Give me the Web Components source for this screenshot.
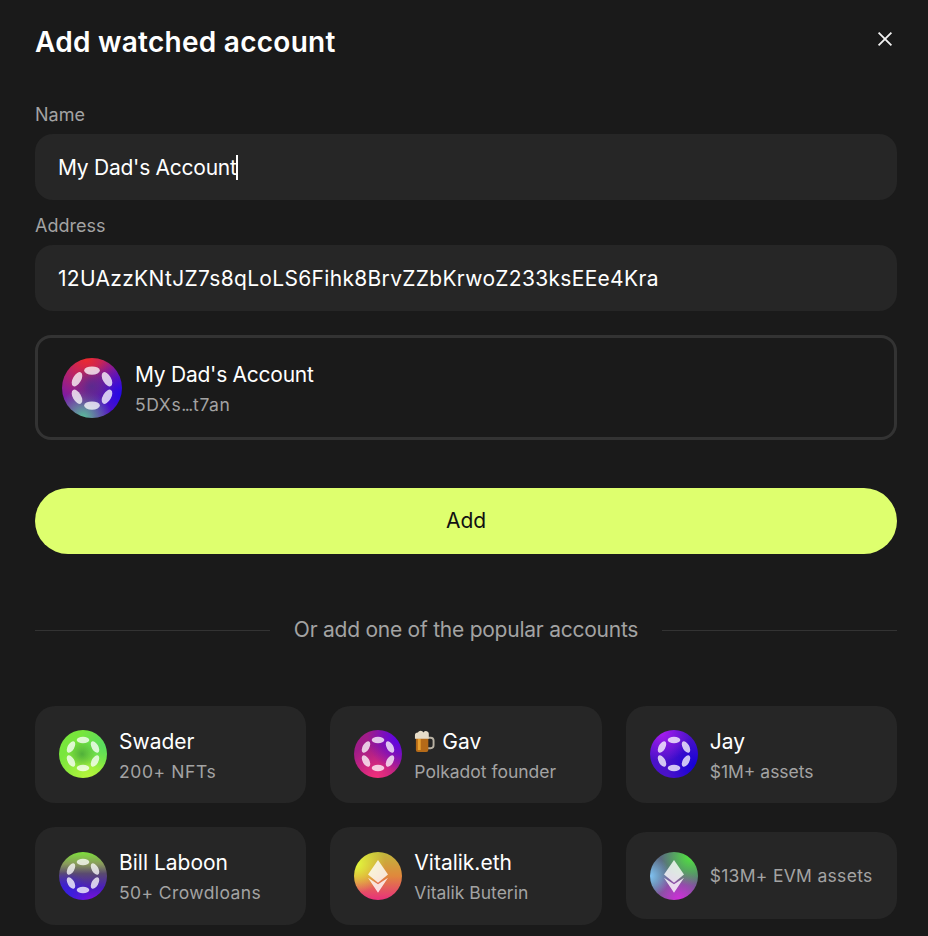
<!doctype html>
<html lang="en">
<head>
<meta charset="utf-8">
<title>Add watched account</title>
<style>
  html, body { margin: 0; height: 100%; background: #1a1a1a; overflow: hidden; }
  body { font-family: Inter, "Liberation Sans", sans-serif; color: #fff; }
</style>
</head>
<body>
<watched-dialog heading="Add watched account">
  <text-field label="Name" value="My Dad's Account" track="-0.25" focused></text-field>
  <text-field label="Address" value="12UAzzKNtJZ7s8qLoLS6Fihk8BrvZZbKrwoZ233ksEEe4Kra" track="0.31"></text-field>
  <account-preview name="My Dad's Account" address="5DXs...t7an"></account-preview>
  <lime-button>Add</lime-button>
  <or-divider>Or add one of the popular accounts</or-divider>
  <account-grid>
    <account-card name="Swader" note="200+ NFTs" logo="dot" tint="swader" track="0.6"></account-card>
    <account-card name="Gav" note="Polkadot founder" logo="dot" tint="gav" beer></account-card>
    <account-card name="Jay" note="$1M+ assets" logo="dot" tint="jay"></account-card>
    <account-card name="Bill Laboon" note="50+ Crowdloans" logo="dot" tint="bill" track="0.4"></account-card>
    <account-card name="Vitalik.eth" note="Vitalik Buterin" logo="eth" tint="vitalik"></account-card>
    <account-card note="$13M+ EVM assets" logo="eth" tint="evm" track="0.3" compact></account-card>
  </account-grid>
</watched-dialog>

<script>
const TINTS = {
  preview: "radial-gradient(circle at 50% 48%, #5b2a8e 0%, transparent 50%), radial-gradient(circle at 35% 100%, #58c09a 0%, transparent 40%), radial-gradient(circle at 100% 62%, #2208e8 0%, transparent 55%), radial-gradient(circle at 40% 0%, #f02a2c 0%, transparent 65%), #7a1aa8",
  swader: "radial-gradient(circle at 48% 50%, #50b03a 0%, transparent 42%), radial-gradient(circle at 95% 30%, #58dc60 0%, transparent 45%), radial-gradient(circle at 60% 100%, #b8f53c 0%, transparent 60%), #78e63c",
  gav: "radial-gradient(circle at 100% 15%, #5200f5 0%, transparent 55%), radial-gradient(circle at 45% 100%, #f4307a 0%, transparent 60%), #a01c88",
  jay: "radial-gradient(circle at 25% 5%, #a81cf0 0%, transparent 50%), radial-gradient(circle at 95% 75%, #1200d8 0%, transparent 50%), #4a12c8",
  bill: "radial-gradient(circle at 15% 90%, #3420e0 0%, transparent 40%), linear-gradient(180deg, #7ee03c 0%, #8a9a5c 25%, #5a4a70 45%, #4a1cc0 75%, #7a10e0 100%)",
  vitalik: "radial-gradient(circle at 5% 25%, #e2f83c 0%, transparent 50%), linear-gradient(180deg, #c0b83c 0%, #e0883c 50%, #e8307c 100%)",
  evm: "radial-gradient(circle at 0% 50%, #80c4f4 0%, transparent 38%), radial-gradient(circle at 85% 8%, #50e83c 0%, transparent 50%), radial-gradient(circle at 60% 100%, #d42cdc 0%, transparent 55%), #5a6a80",
};

const LOGOS = {
  dot: `<g fill="#fff" fill-opacity=".76">
    <ellipse cx="24" cy="10" rx="6.300" ry="3.300"/>
    <ellipse cx="24" cy="38" rx="6.300" ry="3.300"/>
    <ellipse cx="12" cy="17" rx="6.300" ry="3.300" transform="rotate(-60 12 17)"/>
    <ellipse cx="36" cy="17" rx="6.300" ry="3.300" transform="rotate(60 36 17)"/>
    <ellipse cx="12" cy="31" rx="6.300" ry="3.300" transform="rotate(60 12 31)"/>
    <ellipse cx="36" cy="31" rx="6.300" ry="3.300" transform="rotate(-60 36 31)"/>
  </g>`,
  eth: `<g fill="#fff" fill-opacity=".8">
    <path d="M24 8 34 22.500 24 30.700 14 22.500Z"/>
    <path d="M14 25.700 24 32.300 34 25.700 24 40.700Z"/>
  </g>`,
};

class TokenAvatar extends HTMLElement {
  connectedCallback() {
    const size = this.getAttribute("size") ?? 48;
    const root = this.shadowRoot ?? this.attachShadow({ mode: "open" });
    root.innerHTML = `
      <style>
        :host { display: block; flex: none; width: ${size}px; height: ${size}px; border-radius: 50%; overflow: hidden; background: ${TINTS[this.getAttribute("tint")]}; }
        svg { display: block; width: 100%; height: 100%; }
      </style>
      <svg viewBox="0 0 48 48">${LOGOS[this.getAttribute("logo")]}</svg>
    `;
  }
}

class WatchedDialog extends HTMLElement {
  constructor() {
    super();
    this.attachShadow({ mode: "open" });
  }

  connectedCallback() {
    this.shadowRoot.innerHTML = `
      <style>
        :host { display: block; padding: 21px 31px 0 35px; background: #1a1a1a; }
        header { display: flex; justify-content: space-between; align-items: center; height: 42px; margin-bottom: 39px; }
        h1 { margin: 0; font-size: 28px; line-height: 42px; font-weight: 600; letter-spacing: 0.27px; color: #fff; }
        button { all: unset; display: block; width: 24px; height: 24px; margin-top: -6px; }
        svg { display: block; }
        main { display: flex; flex-direction: column; }
      </style>
      <header>
        <h1>${this.getAttribute("heading")}</h1>
        <button aria-label="Close">
          <svg width="24" height="24" viewBox="0 0 24 24" fill="none" stroke="#f2f2f2" stroke-width="1.800"><path d="M5.600 5.600 18.400 18.400M18.400 5.600 5.600 18.400"/></svg>
        </button>
      </header>
      <main><slot></slot></main>
    `;
  }
}

class TextField extends HTMLElement {
  connectedCallback() {
    const root = this.attachShadow({ mode: "open" });
    const caret = this.hasAttribute("focused") ? `<i></i>` : "";
    root.innerHTML = `
      <style>
        :host { display: block; margin-bottom: 13px; }
        label { display: block; height: 32px; font-size: 18px; line-height: 25px; color: #a3a3a3; }
        div { display: flex; align-items: center; height: 66px; padding: 0 23px; box-sizing: border-box; border-radius: 18px; background: #262626; font-size: 21px; color: #fff; }
        span { letter-spacing: ${this.getAttribute("track") ?? 0}px; }
        i { display: block; width: 2px; height: 25px; background: #fff; margin-left: -1px; }
      </style>
      <label>${this.getAttribute("label")}</label>
      <div><span>${this.getAttribute("value")}</span>${caret}</div>
    `;
  }
}

class AccountPreview extends HTMLElement {
  connectedCallback() {
    const root = this.attachShadow({ mode: "open" });
    const address = this.getAttribute("address").replace("...", "<em>...</em>");
    root.innerHTML = `
      <style>
        :host { display: flex; align-items: center; gap: 13px; height: 105px; box-sizing: border-box; padding: 0 24px; border: 3px solid #333; border-radius: 16px; margin: 11px 0 48px; }
        div { padding-top: 3px; }
        b { display: block; font-weight: 400; font-size: 21px; line-height: 30px; letter-spacing: -0.25px; color: #fff; }
        span { display: block; font-size: 17.500px; line-height: 29px; letter-spacing: 0.6px; color: #a3a3a3; }
        em { font-style: normal; letter-spacing: -1.6px; margin-right: 1.500px; }
      </style>
      <token-avatar size="60" logo="dot" tint="preview"></token-avatar>
      <div><b>${this.getAttribute("name")}</b><span>${address}</span></div>
    `;
  }
}

class LimeButton extends HTMLElement {
  connectedCallback() {
    const root = this.attachShadow({ mode: "open" });
    root.innerHTML = `
      <style>
        :host { display: flex; align-items: center; justify-content: center; height: 66px; border-radius: 33px; background: #deff6e; color: #111; font-size: 21px; margin-bottom: 58px; }
        span { padding-bottom: 2px; }
      </style>
      <span><slot></slot></span>
    `;
  }
}

class OrDivider extends HTMLElement {
  connectedCallback() {
    const root = this.attachShadow({ mode: "open" });
    root.innerHTML = `
      <style>
        :host { display: flex; align-items: center; gap: 24px; height: 36px; margin-bottom: 58px; color: #a3a3a3; font-size: 21px; letter-spacing: -0.24px; white-space: nowrap; }
        hr { flex: 1; height: 1px; margin: 0; border: 0; background: #333; }
        span { padding-bottom: 2px; }
      </style>
      <hr><span><slot></slot></span><hr>
    `;
  }
}

class AccountGrid extends HTMLElement {
  connectedCallback() {
    const root = this.attachShadow({ mode: "open" });
    root.innerHTML = `
      <style>
        :host { display: grid; grid-template-columns: repeat(3, 1fr); grid-template-rows: 97px 98px; gap: 24px; }
      </style>
      <slot></slot>
    `;
  }
}

class AccountCard extends HTMLElement {
  connectedCallback() {
    const root = this.attachShadow({ mode: "open" });
    const name = this.getAttribute("name");
    const beer = this.hasAttribute("beer") ? `
      <svg class="beer" width="21" height="23" viewBox="0 0 22 24" aria-label="beer">
        <path d="M14 8h3.500a3 3 0 0 1 3 3v5a3 3 0 0 1-3 3H14" fill="none" stroke="#b9b2a4" stroke-width="2"/>
        <rect x="2" y="6" width="13" height="17" rx="2" fill="#b56a18"/>
        <rect x="4" y="9" width="3" height="12" fill="#e8a030"/>
        <path d="M1 5.500a3 3 0 0 1 3-3 3.500 3.500 0 0 1 6 0 3 3 0 0 1 5.500 2V9H1Z" fill="#e6dcc8"/>
      </svg>` : "";
    const title = name ? `<b>${beer}${name}</b>` : "";
    const compact = this.hasAttribute("compact");
    root.innerHTML = `
      <style>
        :host { display: flex; align-items: center; gap: 12px; padding: 0 24px; border-radius: 20px; background: #262626; }
        :host([compact]) { align-self: center; height: 87px; margin-bottom: 1px; }
        token-avatar { margin-bottom: ${compact ? 0 : 1}px; }
        div { padding-top: ${compact ? 0 : 3}px; }
        b { display: flex; align-items: center; gap: 7px; font-weight: 400; font-size: 21px; line-height: 30px; color: #fff; }
        span { display: block; font-size: 17.500px; line-height: 29px; letter-spacing: ${this.getAttribute("track") ?? 0}px; color: #a3a3a3; white-space: nowrap; }
      </style>
      <token-avatar logo="${this.getAttribute("logo")}" tint="${this.getAttribute("tint")}"></token-avatar>
      <div>${title}<span>${this.getAttribute("note")}</span></div>
    `;
  }
}

customElements.define("token-avatar", TokenAvatar);
customElements.define("watched-dialog", WatchedDialog);
customElements.define("text-field", TextField);
customElements.define("account-preview", AccountPreview);
customElements.define("lime-button", LimeButton);
customElements.define("or-divider", OrDivider);
customElements.define("account-grid", AccountGrid);
customElements.define("account-card", AccountCard);
</script>
</body>
</html>
